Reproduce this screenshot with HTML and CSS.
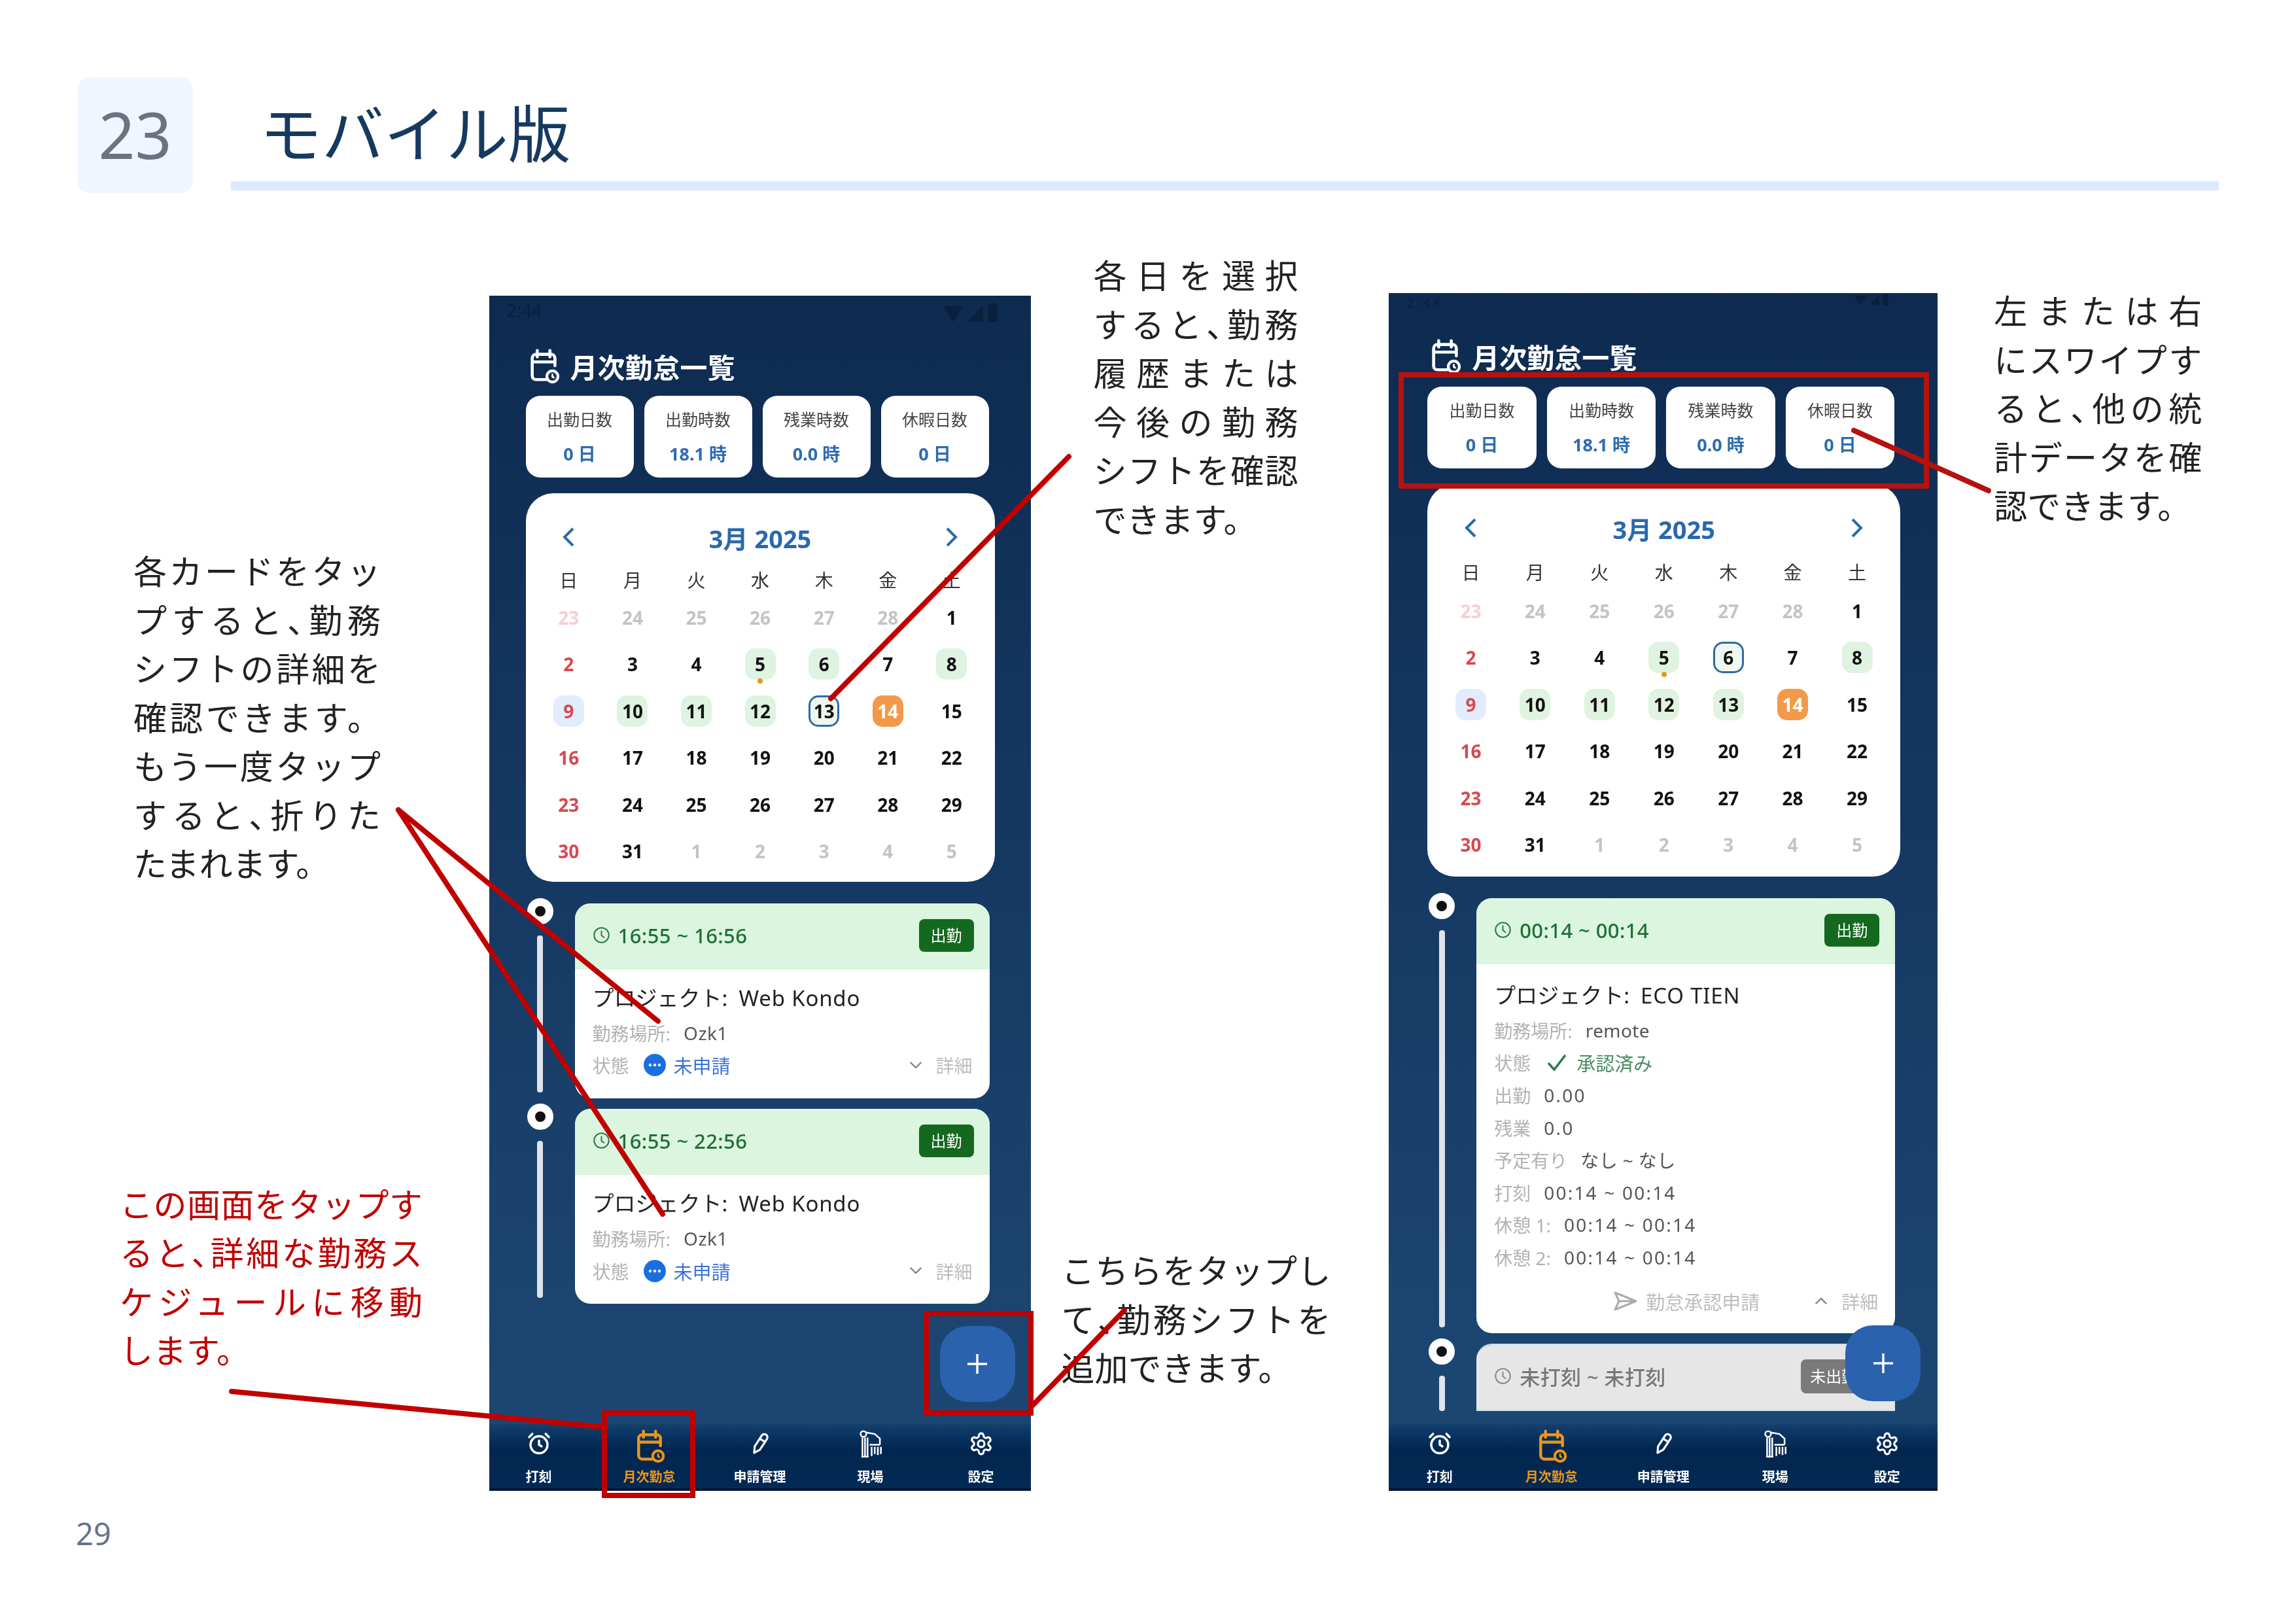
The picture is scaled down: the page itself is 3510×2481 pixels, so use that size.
FILE: index.html
```html
<!DOCTYPE html>
<html lang="ja">
<head>
<meta charset="utf-8">
<title>モバイル版</title>
<link rel="stylesheet" href="styles.css">
</head>
<body>
<svg class="defs" width="0" height="0" aria-hidden="true">
  <symbol id="i-cal" viewBox="0 0 24 28"><path d="M7 2v5M17 2v5M3 11h17M21 14V8a3 3 0 0 0-3-3H6a3 3 0 0 0-3 3v14a3 3 0 0 0 3 3h8" fill="none" stroke="currentColor" stroke-width="2.4" stroke-linecap="round"/><circle cx="19" cy="22.5" r="4.4" fill="none" stroke="currentColor" stroke-width="2.2"/><path d="M19 20.5v2.2l1.5 1" fill="none" stroke="currentColor" stroke-width="1.5"/></symbol>
  <symbol id="i-clock" viewBox="0 0 24 24"><circle cx="12" cy="12" r="10" fill="none" stroke="currentColor" stroke-width="1.8"/><path d="M12 6v6.5l4 3" fill="none" stroke="currentColor" stroke-width="1.8"/></symbol>
  <symbol id="i-alarm" viewBox="0 0 24 24"><circle cx="12" cy="13" r="8.2" fill="none" stroke="currentColor" stroke-width="2.2"/><path d="M12 9v4l2.5 1.5M5.5 2.5 2.5 5.5M18.500 2.500l3 3" fill="none" stroke="currentColor" stroke-width="2.2" stroke-linecap="round"/></symbol>
  <symbol id="i-pen" viewBox="0 0 24 24"><g transform="rotate(33 12 12)"><path d="M9 8V4.500a3 3 0 0 1 6 0V8zM9 8h6v9l-3 5.500-3-5.500z" fill="none" stroke="currentColor" stroke-width="2" stroke-linejoin="round"/></g></symbol>
  <symbol id="i-site" viewBox="0 0 24 28"><g fill="none" stroke="currentColor" stroke-width="1.600"><circle cx="5" cy="4.500" r="2.800"/><path d="M7.500 3 16 4.500 21 9v6M4 8v18M6.500 8v18M9 8v18M3 26.500h7M11 15h10M13 17v9M16 17v7M19 17v8M22 17v7"/></g></symbol>
  <symbol id="i-gear" viewBox="0 0 24 24"><path d="M12.220 2h-.44a2 2 0 0 0-2 2v.18a2 2 0 0 1-1 1.730l-.43.25a2 2 0 0 1-2 0l-.15-.08a2 2 0 0 0-2.730.73l-.22.38a2 2 0 0 0 .73 2.730l.15.1a2 2 0 0 1 1 1.720v.51a2 2 0 0 1-1 1.740l-.15.09a2 2 0 0 0-.73 2.730l.22.38a2 2 0 0 0 2.730.73l.15-.08a2 2 0 0 1 2 0l.43.25a2 2 0 0 1 1 1.730V20a2 2 0 0 0 2 2h.44a2 2 0 0 0 2-2v-.18a2 2 0 0 1 1-1.730l.43-.25a2 2 0 0 1 2 0l.15.08a2 2 0 0 0 2.730-.73l.22-.39a2 2 0 0 0-.73-2.730l-.15-.08a2 2 0 0 1-1-1.740v-.5a2 2 0 0 1 1-1.740l.15-.09a2 2 0 0 0 .73-2.730l-.22-.38a2 2 0 0 0-2.730-.73l-.15.08a2 2 0 0 1-2 0l-.43-.25a2 2 0 0 1-1-1.730V4a2 2 0 0 0-2-2z" fill="none" stroke="currentColor" stroke-width="2"/><circle cx="12" cy="12" r="3.200" fill="none" stroke="currentColor" stroke-width="2"/></symbol>
  <symbol id="i-plus" viewBox="0 0 32 32"><path d="M16 1v30M1 16h30" stroke="currentColor" stroke-width="3.500"/></symbol>
  <symbol id="i-left" viewBox="0 0 22 32"><path d="M18 3 5 16l13 13" fill="none" stroke="currentColor" stroke-width="4"/></symbol>
  <symbol id="i-right" viewBox="0 0 22 32"><path d="M4 3l13 13L4 29" fill="none" stroke="currentColor" stroke-width="4"/></symbol>
  <symbol id="i-down" viewBox="0 0 24 16"><path d="M3 3l9 9 9-9" fill="none" stroke="currentColor" stroke-width="2.600"/></symbol>
  <symbol id="i-up" viewBox="0 0 24 16"><path d="M3 13l9-9 9 9" fill="none" stroke="currentColor" stroke-width="2.600"/></symbol>
  <symbol id="i-more" viewBox="0 0 34 34"><circle cx="17" cy="17" r="17" fill="#1a6fe0"/><circle cx="10" cy="17" r="2.200" fill="#fff"/><circle cx="17" cy="17" r="2.200" fill="#fff"/><circle cx="24" cy="17" r="2.200" fill="#fff"/></symbol>
  <symbol id="i-check" viewBox="0 0 32 28"><path d="M3 15l9 10L29 3" fill="none" stroke="currentColor" stroke-width="3.500"/></symbol>
  <symbol id="i-send" viewBox="0 0 36 32"><path d="M2 3l32 13L2 29l6-13zM8 16h26" fill="none" stroke="currentColor" stroke-width="3" stroke-linejoin="round"/></symbol>
  <symbol id="i-status" viewBox="0 0 86 32"><path d="M0 6h32L16 30zM62 4v26H38zM70 4h4V1h6v3h4v26H70z" fill="currentColor"/></symbol>
</svg>

<div class="slide">
  <header class="head">
    <div class="head-num">23</div>
    <div class="head-title">
      <h1 class="title">モバイル版</h1>
      <div class="title-rule"></div>
    </div>
  </header>

  <main class="main">
    <section class="col col-left">
      <p class="note note-left"><span class="ln">各カードをタッ</span><span class="ln">プすると<span class="pn">、</span>勤務</span><span class="ln">シフトの詳細を</span><span class="ln">確認できます。</span><span class="ln">もう一度タップ</span><span class="ln">すると<span class="pn">、</span>折りた</span><span class="ln last">たまれます。</span></p>
      <p class="note note-red"><span class="ln">この画面をタップす</span><span class="ln">ると<span class="pn">、</span>詳細な勤務ス</span><span class="ln">ケジュールに移動</span><span class="ln last">します。</span></p>
    </section>

    <section class="phone phone-a">
      <div class="status"><span>2:44</span><svg class="status-icons"><use href="#i-status"/></svg></div>
      <div class="phone-main">
        <div class="app-title"><svg class="app-icon"><use href="#i-cal"/></svg><span>月次勤怠一覧</span></div>
        <div class="stats">
          <div class="stat"><div class="stat-label">出勤日数</div><div class="stat-value">0 日</div></div>
          <div class="stat"><div class="stat-label">出勤時数</div><div class="stat-value">18.1 時</div></div>
          <div class="stat"><div class="stat-label">残業時数</div><div class="stat-value">0.0 時</div></div>
          <div class="stat"><div class="stat-label">休暇日数</div><div class="stat-value">0 日</div></div>
        </div>
        <div class="cal">
          <div class="cal-head"><svg class="arrow"><use href="#i-left"/></svg><div class="cal-month">3月 2025</div><svg class="arrow"><use href="#i-right"/></svg></div>
          <div class="cal-week"><span>日</span><span>月</span><span>火</span><span>水</span><span>木</span><span>金</span><span>土</span></div>
          <div class="cal-days">
            <span class="day off-sun">23</span><span class="day off">24</span><span class="day off">25</span><span class="day off">26</span><span class="day off">27</span><span class="day off">28</span><span class="day">1</span>
            <span class="day sun">2</span><span class="day">3</span><span class="day">4</span><span class="day"><b class="chip green">5</b><i class="mark"></i></span><span class="day"><b class="chip green">6</b></span><span class="day">7</span><span class="day"><b class="chip green">8</b></span>
            <span class="day sun"><b class="chip blue">9</b></span><span class="day"><b class="chip green">10</b></span><span class="day"><b class="chip green">11</b></span><span class="day"><b class="chip green">12</b></span><span class="day"><b class="chip green sel">13</b></span><span class="day"><b class="chip orange">14</b></span><span class="day">15</span>
            <span class="day sun">16</span><span class="day">17</span><span class="day">18</span><span class="day">19</span><span class="day">20</span><span class="day">21</span><span class="day">22</span>
            <span class="day sun">23</span><span class="day">24</span><span class="day">25</span><span class="day">26</span><span class="day">27</span><span class="day">28</span><span class="day">29</span>
            <span class="day sun">30</span><span class="day">31</span><span class="day off">1</span><span class="day off">2</span><span class="day off">3</span><span class="day off">4</span><span class="day off">5</span>
          </div>
        </div>
        <div class="timeline">
          <div class="tl-row">
            <div class="rail"><span class="rail-dot"></span><span class="rail-line"></span></div>
            <article class="shift">
              <div class="shift-head"><svg class="clock"><use href="#i-clock"/></svg><span class="shift-time">16:55 ~ 16:56</span><span class="shift-tag">出勤</span></div>
              <div class="shift-body">
                <div class="project">プロジェクト:<span class="project-name">Web Kondo</span></div>
                <div class="row row-first"><span class="lbl">勤務場所:</span><span class="val">Ozk1</span></div>
                <div class="row"><span class="lbl">状態</span><svg class="more"><use href="#i-more"/></svg><span class="pending">未申請</span><span class="detail"><svg class="chev"><use href="#i-down"/></svg>詳細</span></div>
              </div>
            </article>
          </div>
          <div class="tl-row">
            <div class="rail"><span class="rail-dot"></span><span class="rail-line"></span></div>
            <article class="shift">
              <div class="shift-head"><svg class="clock"><use href="#i-clock"/></svg><span class="shift-time">16:55 ~ 22:56</span><span class="shift-tag">出勤</span></div>
              <div class="shift-body">
                <div class="project">プロジェクト:<span class="project-name">Web Kondo</span></div>
                <div class="row row-first"><span class="lbl">勤務場所:</span><span class="val">Ozk1</span></div>
                <div class="row"><span class="lbl">状態</span><svg class="more"><use href="#i-more"/></svg><span class="pending">未申請</span><span class="detail"><svg class="chev"><use href="#i-down"/></svg>詳細</span></div>
              </div>
            </article>
          </div>
        </div>
      </div>
      <nav class="nav">
        <div class="nav-item"><span class="nav-icon"><svg class="nav-svg"><use href="#i-alarm"/></svg></span><span>打刻</span></div>
        <div class="nav-item active"><span class="nav-icon"><svg class="nav-svg-cal"><use href="#i-cal"/></svg></span><span>月次勤怠</span></div>
        <div class="nav-item"><span class="nav-icon"><svg class="nav-svg"><use href="#i-pen"/></svg></span><span>申請管理</span></div>
        <div class="nav-item"><span class="nav-icon"><svg class="nav-svg-site"><use href="#i-site"/></svg></span><span>現場</span></div>
        <div class="nav-item"><span class="nav-icon"><svg class="nav-svg"><use href="#i-gear"/></svg></span><span>設定</span></div>
      </nav>
      <div class="fab"><svg class="plus"><use href="#i-plus"/></svg></div>
    </section>

    <section class="col col-mid">
      <p class="note note-top"><span class="ln">各日を選択</span><span class="ln">すると<span class="pn">、</span>勤務</span><span class="ln">履歴または</span><span class="ln">今後の勤務</span><span class="ln">シフトを確認</span><span class="ln last">できます。</span></p>
      <p class="note note-add"><span class="ln">こちらをタップし</span><span class="ln">て<span class="pn">、</span>勤務シフトを</span><span class="ln last">追加できます。</span></p>
    </section>

    <section class="phone phone-b">
      <div class="status"><span>2:48</span><svg class="status-icons"><use href="#i-status"/></svg></div>
      <div class="phone-main">
        <div class="app-title"><svg class="app-icon"><use href="#i-cal"/></svg><span>月次勤怠一覧</span></div>
        <div class="stats">
          <div class="stat"><div class="stat-label">出勤日数</div><div class="stat-value">0 日</div></div>
          <div class="stat"><div class="stat-label">出勤時数</div><div class="stat-value">18.1 時</div></div>
          <div class="stat"><div class="stat-label">残業時数</div><div class="stat-value">0.0 時</div></div>
          <div class="stat"><div class="stat-label">休暇日数</div><div class="stat-value">0 日</div></div>
        </div>
        <div class="cal">
          <div class="cal-head"><svg class="arrow"><use href="#i-left"/></svg><div class="cal-month">3月 2025</div><svg class="arrow"><use href="#i-right"/></svg></div>
          <div class="cal-week"><span>日</span><span>月</span><span>火</span><span>水</span><span>木</span><span>金</span><span>土</span></div>
          <div class="cal-days">
            <span class="day off-sun">23</span><span class="day off">24</span><span class="day off">25</span><span class="day off">26</span><span class="day off">27</span><span class="day off">28</span><span class="day">1</span>
            <span class="day sun">2</span><span class="day">3</span><span class="day">4</span><span class="day"><b class="chip green">5</b><i class="mark"></i></span><span class="day"><b class="chip green sel">6</b></span><span class="day">7</span><span class="day"><b class="chip green">8</b></span>
            <span class="day sun"><b class="chip blue">9</b></span><span class="day"><b class="chip green">10</b></span><span class="day"><b class="chip green">11</b></span><span class="day"><b class="chip green">12</b></span><span class="day"><b class="chip green">13</b></span><span class="day"><b class="chip orange">14</b></span><span class="day">15</span>
            <span class="day sun">16</span><span class="day">17</span><span class="day">18</span><span class="day">19</span><span class="day">20</span><span class="day">21</span><span class="day">22</span>
            <span class="day sun">23</span><span class="day">24</span><span class="day">25</span><span class="day">26</span><span class="day">27</span><span class="day">28</span><span class="day">29</span>
            <span class="day sun">30</span><span class="day">31</span><span class="day off">1</span><span class="day off">2</span><span class="day off">3</span><span class="day off">4</span><span class="day off">5</span>
          </div>
        </div>
        <div class="timeline">
          <div class="tl-row">
            <div class="rail"><span class="rail-dot"></span><span class="rail-line"></span></div>
            <article class="shift">
              <div class="shift-head"><svg class="clock"><use href="#i-clock"/></svg><span class="shift-time">00:14 ~ 00:14</span><span class="shift-tag">出勤</span></div>
              <div class="shift-body">
                <div class="project">プロジェクト:<span class="project-name">ECO TIEN</span></div>
                <div class="row row-first"><span class="lbl">勤務場所:</span><span class="val">remote</span></div>
                <div class="row"><span class="lbl">状態</span><svg class="check"><use href="#i-check"/></svg><span class="approved">承認済み</span></div>
                <div class="row"><span class="lbl">出勤</span><span class="val num">0.00</span></div>
                <div class="row"><span class="lbl">残業</span><span class="val num">0.0</span></div>
                <div class="row"><span class="lbl">予定有り</span><span class="val">なし ~ なし</span></div>
                <div class="row"><span class="lbl">打刻</span><span class="val num">00:14 ~ 00:14</span></div>
                <div class="row"><span class="lbl">休憩 1:</span><span class="val num">00:14 ~ 00:14</span></div>
                <div class="row"><span class="lbl">休憩 2:</span><span class="val num">00:14 ~ 00:14</span></div>
                <div class="row row-actions"><svg class="send"><use href="#i-send"/></svg><span class="apply">勤怠承認申請</span><span class="detail detail-open"><svg class="chev"><use href="#i-up"/></svg>詳細</span></div>
              </div>
            </article>
          </div>
          <div class="tl-row">
            <div class="rail"><span class="rail-dot"></span><span class="rail-line rail-open"></span></div>
            <article class="shift shift-grey">
              <div class="shift-head"><svg class="clock"><use href="#i-clock"/></svg><span class="shift-time">未打刻 ~ 未打刻</span><span class="shift-tag">未出勤</span></div>
            </article>
          </div>
        </div>
      </div>
      <nav class="nav">
        <div class="nav-item"><span class="nav-icon"><svg class="nav-svg"><use href="#i-alarm"/></svg></span><span>打刻</span></div>
        <div class="nav-item active"><span class="nav-icon"><svg class="nav-svg-cal"><use href="#i-cal"/></svg></span><span>月次勤怠</span></div>
        <div class="nav-item"><span class="nav-icon"><svg class="nav-svg"><use href="#i-pen"/></svg></span><span>申請管理</span></div>
        <div class="nav-item"><span class="nav-icon"><svg class="nav-svg-site"><use href="#i-site"/></svg></span><span>現場</span></div>
        <div class="nav-item"><span class="nav-icon"><svg class="nav-svg"><use href="#i-gear"/></svg></span><span>設定</span></div>
      </nav>
      <div class="fab"><svg class="plus"><use href="#i-plus"/></svg></div>
    </section>

    <section class="col col-right">
      <p class="note note-right"><span class="ln">左または右</span><span class="ln">にスワイプす</span><span class="ln">ると<span class="pn">、</span>他の統</span><span class="ln">計データを確</span><span class="ln last">認できます。</span></p>
    </section>
  </main>

  <footer class="page-num">29</footer>

  <svg class="marks" viewBox="0 0 3510 2481">
    <g class="marks-a">
      <path d="M1634 698 1270 1068"/>
      <path d="M609 1238 1006 1561"/>
      <path d="M609 1238 1013 1856"/>
      <path d="M354 2127 917 2181"/>
      <path d="M1578 2149 1719 2003"/>
      <rect x="924" y="2160" width="135" height="126"/>
      <rect x="1416" y="2008" width="160" height="152"/>
    </g>
    <g class="marks-b">
      <path d="M2834 658 3040 750"/>
      <rect x="2142" y="573" width="803" height="170"/>
    </g>
  </svg>
</div>
</body>
</html>
```

FILE: styles.css
```css
* { box-sizing: border-box; }

html, body { margin: 0; padding: 0; background: #fff; }

body {
  font-family: "Noto Sans CJK JP", "Noto Sans", sans-serif;
  color: #222;
}

.defs { position: absolute; }

.slide {
  position: relative;
  width: 3510px;
  height: 2481px;
  padding: 118px 118px 0;
  overflow: hidden;
}

/* Heading */
.head { display: flex; height: 177px; }

.head-num {
  width: 177px;
  height: 177px;
  border-radius: 20px;
  background: #eff6ff;
  color: #6b7280;
  font-family: "Noto Sans", sans-serif;
  font-size: 98px;
  line-height: 175px;
  text-align: center;
}

.head-title { flex: 1; margin-left: 58px; }

.title {
  margin: 0;
  height: 159px;
  padding-left: 44px;
  color: #163a5f;
  font-size: 95px;
  font-weight: 400;
  line-height: 163px;
}

.title-rule { height: 14px; background: #dbeafe; }

/* Main row */
.main { display: flex; height: 1984px; }

.col { display: flex; flex-direction: column; align-items: flex-start; }

.col-left { width: 630px; padding-top: 539px; }
.col-mid { width: 548px; padding-top: 87px; }
.col-right { width: 430px; padding-top: 141px; padding-left: 86px; }

.note { margin: 0; font-size: 51px; line-height: 74.5px; }

.ln { display: block; text-align: justify; text-align-last: justify; white-space: nowrap; }
.ln.last { text-align-last: left; }

.pn { font-feature-settings: "halt"; }

.note-left { width: 378px; margin-left: 86px; }
.note-red { width: 463px; margin-top: 446px; margin-left: 65px; color: #c00000; }
.note-top { width: 313px; margin-left: 96px; }
.note-add { width: 412px; margin-top: 1074px; margin-left: 47px; }
.note-right { width: 318px; }

.page-num {
  margin-top: 33px;
  margin-left: -2px;
  color: #64748b;
  font-family: "Noto Sans", sans-serif;
  font-size: 47px;
  line-height: 64px;
}

/* Phone */
.phone {
  position: relative;
  display: flex;
  flex-direction: column;
  flex: none;
  overflow: hidden;
  background: linear-gradient(#0e2a50, #1c4672 90%);
  font-family: "Noto Sans", "Noto Sans CJK JP", sans-serif;
  filter: blur(0.7px);
}

.phone-a { width: 828px; height: 1827px; margin-top: 157px; }
.phone-b { width: 839px; height: 1831px; margin-top: 153px; }

.status {
  display: flex;
  justify-content: space-between;
  align-items: flex-start;
  color: #09203e;
  font-size: 27px;
  line-height: 26px;
}

.phone-a .status { height: 44px; padding: 10px 49px 0 27px; }
.phone-b .status { height: 30px; padding: 6px 58px 0 27px; font-size: 20px; line-height: 20px; letter-spacing: 4px; }

.status-icons { width: 86px; height: 32px; }
.phone-b .status-icons { height: 20px; margin-top: -6px; }

.phone-main { flex: 1; min-height: 0; display: flex; flex-direction: column; }
.phone-a .phone-main { padding: 38px 64px 0 56px; }
.phone-b .phone-main { padding: 41px 66px 0 59px; }

.app-title {
  display: flex;
  align-items: center;
  gap: 17px;
  height: 50px;
  padding-left: 3px;
  color: #fff;
  font-size: 42px;
  font-weight: 700;
}

.app-icon { flex: none; width: 48px; height: 54px; color: #fff; }

.stats {
  display: grid;
  grid-template-columns: repeat(4, 1fr);
  gap: 16px;
  margin-top: 21px;
}

.phone-b .stats { margin-top: 22px; }

.stat {
  height: 125px;
  border-radius: 22px;
  background: #fff;
  text-align: center;
  padding-top: 18px;
}

.stat-label { color: #444; font-size: 25px; line-height: 36px; }
.stat-value { margin-top: 17px; color: #2d6bb0; font-size: 27px; font-weight: 700; line-height: 36px; }

.cal {
  margin-top: 24px;
  margin-right: -9px;
  padding: 37px 17px 11px;
  border-radius: 42px;
  background: #fff;
}

.phone-b .cal { padding-bottom: 13px; }

.cal-head {
  display: grid;
  grid-template-columns: 1fr 5fr 1fr;
  align-items: center;
  justify-items: center;
  height: 60px;
  color: #2a68ad;
}

.arrow { width: 22px; height: 32px; }

.cal-month { font-size: 38px; font-weight: 700; }

.cal-week {
  display: grid;
  grid-template-columns: repeat(7, 1fr);
  height: 40px;
  margin-top: 16px;
  color: #333;
  font-size: 28px;
  line-height: 40px;
  text-align: center;
}

.phone-b .cal-week { margin-top: 18px; }

.cal-days {
  display: grid;
  grid-template-columns: repeat(7, 1fr);
  grid-auto-rows: 71.5px;
  margin-top: 1px;
}

.phone-b .cal-days { margin-top: 3px; }

.day {
  position: relative;
  display: flex;
  align-items: center;
  justify-content: center;
  color: #111;
  font-size: 28px;
  font-weight: 700;
}

.day.sun { color: #d9484f; }
.day.off { color: #c4c4c4; }
.day.off-sun { color: #f6cfd0; }

.chip {
  display: flex;
  align-items: center;
  justify-content: center;
  width: 47px;
  height: 48px;
  border-radius: 15px;
  font-weight: 700;
}

.chip.green { background: #dff3e0; }
.chip.blue { background: #e2edfb; }
.chip.orange { background: #f39a4a; color: #fff; }
.chip.sel { border: 3px solid #2f6aa5; background: #eef8ee; }

.mark {
  position: absolute;
  top: calc(50% + 22px);
  left: calc(50% - 4px);
  width: 8px;
  height: 8px;
  border-radius: 50%;
  background: #e8961e;
}

/* Timeline */
.timeline {
  display: flex;
  flex-direction: column;
  gap: 16px;
  margin-top: 25px;
  padding-top: 8px;
  margin-right: -1px;
}

.tl-row { display: flex; gap: 31px; }

.rail {
  display: flex;
  flex-direction: column;
  align-items: center;
  flex: none;
  gap: 17px;
  width: 44px;
  margin-top: -8px;
}

.rail-dot {
  flex: none;
  width: 40px;
  height: 40px;
  border: 12px solid #fff;
  border-radius: 50%;
  background: #111;
}

.rail-line {
  flex: 1;
  width: 9px;
  margin-bottom: 9px;
  border-radius: 4px;
  background: #dfe3ea;
}

.rail-open { margin-bottom: 0; }

.shift {
  flex: 1;
  min-width: 0;
  overflow: hidden;
  border-radius: 24px;
  background: #fff;
}

.shift-head {
  display: flex;
  align-items: center;
  height: 101px;
  padding: 0 24px 4px 27px;
  background: #dcf5de;
}

.clock { width: 27px; height: 27px; color: #2d7a44; flex: none; }

.shift-time {
  margin-left: 12px;
  color: #1e7038;
  font-size: 31px;
  font-weight: 500;
  letter-spacing: 0.4px;
}

.shift-tag {
  margin-left: auto;
  width: 84px;
  height: 50px;
  border-radius: 8px;
  background: #15691f;
  color: #fff;
  font-size: 24px;
  line-height: 50px;
  text-align: center;
}

.shift-body { padding: 19px 26px 26px 27px; }
.phone-b .shift-body { padding-top: 23px; padding-bottom: 25px; }

.project { color: #222; font-size: 33px; line-height: 50px; }
.project-name { margin-left: 17px; letter-spacing: 0.8px; }

.row {
  display: flex;
  align-items: center;
  height: 49.6px;
  font-size: 28px;
  color: #555;
}

.row-first { margin-top: 3px; }

.lbl { color: #b2b2b2; font-size: 28px; }
.val { margin-left: 20px; color: #555; letter-spacing: 0.4px; }
.val.num { letter-spacing: 2.2px; }

.more { width: 34px; height: 34px; margin-left: 22px; flex: none; }
.pending { margin-left: 12px; color: #3b73d5; font-size: 29px; }

.detail {
  display: flex;
  align-items: center;
  gap: 20px;
  margin-left: auto;
  color: #bdbdbd;
  font-size: 28px;
}

.detail-open { margin-left: 83px; }

.chev { width: 22px; height: 15px; color: #888; }

.check { width: 32px; height: 28px; margin-left: 24px; color: #2d7a44; flex: none; }
.approved { margin-left: 14px; color: #4a8d61; font-size: 29px; }

.row-actions { justify-content: flex-end; margin-top: 17px; }
.send { width: 36px; height: 32px; color: #aaa; flex: none; }
.apply { margin-left: 13px; color: #bdbdbd; font-size: 29px; }

.shift-grey {
  border-radius: 24px 24px 0 0;
  border-top: 2px solid #cfe0f0;
  border-bottom: 2px solid #cfe0f0;
  background: #e6e6e6;
}

.shift-grey .shift-head { height: 99px; padding-bottom: 4px; background: #e6e6e6; }
.shift-grey .clock { color: #888; }
.shift-grey .shift-time { color: #777; }
.shift-grey .shift-tag { width: 120px; height: 52px; line-height: 52px; background: #7a7a7a; text-align: left; padding-left: 14px; }

/* Bottom nav */
.nav {
  display: grid;
  justify-content: center;
  height: 102px;
  flex: none;
  padding-top: 2px;
  border-bottom: 4px solid #061632;
  background: linear-gradient(#14406e, #06305c 24%, #02264f 40%, #022a55);
  color: #fff;
  font-size: 20px;
  font-weight: 700;
}

.phone-a .nav { grid-template-columns: repeat(5, 169px); }
.phone-b .nav { grid-template-columns: repeat(5, 171px); }

.nav-item { display: flex; flex-direction: column; align-items: center; line-height: 40px; }
.nav-item.active { color: #e8961e; }

.nav-icon { display: flex; align-items: center; justify-content: center; height: 56px; margin-bottom: 3px; }

.nav-svg { width: 38px; height: 38px; }
.nav-svg-cal { width: 50px; height: 52px; margin-top: 6px; }
.nav-svg-site { width: 40px; height: 44px; }

.fab {
  position: absolute;
  display: flex;
  align-items: center;
  justify-content: center;
  width: 115px;
  height: 116px;
  border-radius: 42px;
  background: #2a62ae;
  color: #fff;
}

.phone-a .fab { right: 24px; bottom: 136px; }
.phone-b .fab { right: 26px; bottom: 137px; }

.plus { width: 32px; height: 32px; }

/* Red callouts drawn over everything */
.marks {
  position: absolute;
  top: 0;
  left: 0;
  width: 3510px;
  height: 2481px;
  pointer-events: none;
}

.marks path, .marks rect { fill: none; stroke-width: 8; stroke-linecap: round; }
.marks-a path, .marks-a rect { stroke: #c00000; }
.marks-b path, .marks-b rect { stroke: #b5120f; }
```
